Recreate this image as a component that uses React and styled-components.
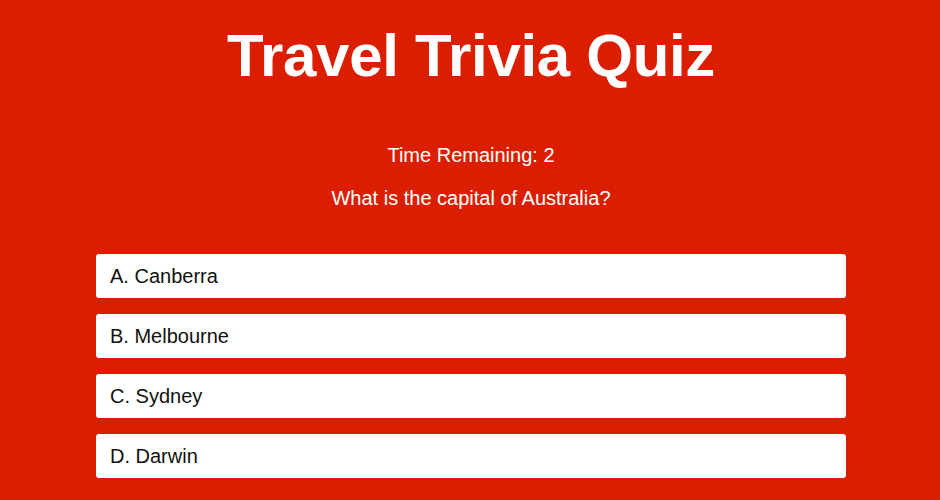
import styled, { createGlobalStyle } from "styled-components"

const GlobalStyle = createGlobalStyle`
html, body {
  margin: 0;
  padding: 0;
  background: #db1e00;
}
body {
  font-family: "Liberation Sans", Arial, Helvetica, sans-serif;
}
`

const Page = styled.div`
min-height: 500px;
background: #db1e00;
color: #fff;
display: flex;
flex-direction: column;
align-items: center;
padding: 21px 0 0 2px;
box-sizing: border-box;
`

const Title = styled.h1`
margin: 0;
font-size: 60px;
line-height: 69px;
font-weight: 700;
letter-spacing: -0.3px;
`

const Info = styled.p`
margin: 0;
font-size: 20px;
line-height: 23px;
margin-top: ${(p) => p.top}px;
`

const Answers = styled.div`
width: 750px;
margin-top: 44px;
display: flex;
flex-direction: column;
gap: 16px;
`

const Answer = styled.button`
height: 44px;
background: #fff;
border: none;
border-radius: 3px;
padding: 0 14px;
text-align: left;
font-family: inherit;
font-size: 20px;
line-height: 23px;
color: #111;
cursor: pointer;
`

const ANSWERS = ["A. Canberra", "B. Melbourne", "C. Sydney", "D. Darwin"]

const App = () => {
  return (
    <Page>
      <GlobalStyle />
      <Title>Travel Trivia Quiz</Title>
      <Info top={54}>Time Remaining: 2</Info>
      <Info top={20}>What is the capital of Australia?</Info>
      <Answers>
        {ANSWERS.map((a) => (
          <Answer key={a}>{a}</Answer>
        ))}
      </Answers>
    </Page>
  )
}

export default App
